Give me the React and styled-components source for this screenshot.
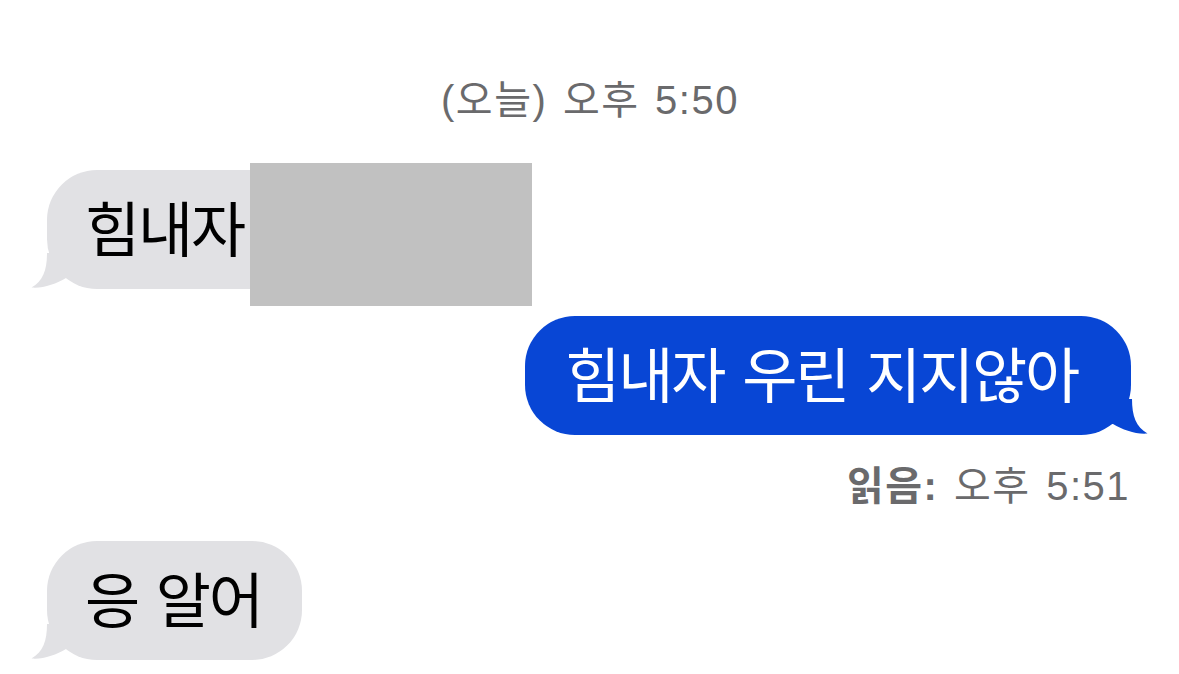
import React from "react";
import styled, { createGlobalStyle } from "styled-components";

const Global = createGlobalStyle`
  html, body { margin: 0; padding: 0; background: #ffffff; }
  body { font-family: "Liberation Sans", "Noto Sans CJK KR", sans-serif; }
`;

const Thread = styled.div`
  width: 1179px;
  height: 674px;
  box-sizing: border-box;
  padding: 77px 48px 0 47px;
  display: flex;
  flex-direction: column;
  overflow: hidden;
`;

const Meta = styled.div`
  font-family: "Liberation Sans", "Noto Sans CJK KR", sans-serif;
  font-size: 40px;
  line-height: 46px;
  letter-spacing: 1.5px;
  word-spacing: 3px;
  color: #6a6a6c;
  white-space: nowrap;
`;

const Stamp = styled(Meta)`
  align-self: center;
  margin-left: 2px;
`;

const Receipt = styled(Meta)`
  align-self: flex-end;
  margin-top: 28px;
  margin-right: 1px;
`;

const Bold = styled.span`
  font-weight: 700;
`;

const Row = styled.div`
  display: flex;
  justify-content: ${(p) => (p.$out ? "flex-end" : "flex-start")};
  margin-top: ${(p) => p.$top}px;
`;

const Bubble = styled.div`
  position: relative;
  height: 119px;
  box-sizing: border-box;
  padding: ${(p) => p.$pad};
  border-radius: 50px;
  background: ${(p) => (p.$out ? "#0846d5" : "#e1e1e4")};
  color: ${(p) => (p.$out ? "#ffffff" : "#000000")};
  font-family: "Noto Sans CJK KR", sans-serif;
  font-size: 60px;
  letter-spacing: -2.2px;
  word-spacing: 6.6px;
  line-height: 112px;
  white-space: nowrap;
`;

const Tail = styled.svg`
  position: absolute;
  bottom: 0;
  width: 40px;
  height: 36px;
  ${(p) => (p.$out ? "right: -17px; transform: scaleX(-1);" : "left: -16px;")}
`;

const Redaction = styled.div`
  position: absolute;
  left: 203px;
  top: -7px;
  width: 282px;
  height: 143px;
  background: #c1c1c1;
`;

const BubbleTail = ({ out, color }) => (
  <Tail $out={out} viewBox="0 0 40 36">
    <path
      d="M16 0 C16 17 12 28 0.5 34.5 C12 35.5 25 31 35 25 L40 25 L40 0 Z"
      fill={color}
    />
  </Tail>
);

export default function App() {
  return (
    <>
      <Global />
      <Thread>
        <Stamp>(오늘) 오후 5:50</Stamp>
        <Row $top={47}>
          <Bubble $pad="0 260px 0 38px">
            힘내자
            <BubbleTail color="#e1e1e4" />
            <Redaction />
          </Bubble>
        </Row>
        <Row $out $top={27}>
          <Bubble $out $pad="0 53px 0 40px">
            힘내자 우린 지지않아
            <BubbleTail out color="#0846d5" />
          </Bubble>
        </Row>
        <Receipt>
          <Bold>읽음:</Bold> 오후 5:51
        </Receipt>
        <Row $top={32}>
          <Bubble $pad="0 40px 0 38px">
            응 알어
            <BubbleTail color="#e1e1e4" />
          </Bubble>
        </Row>
      </Thread>
    </>
  );
}
